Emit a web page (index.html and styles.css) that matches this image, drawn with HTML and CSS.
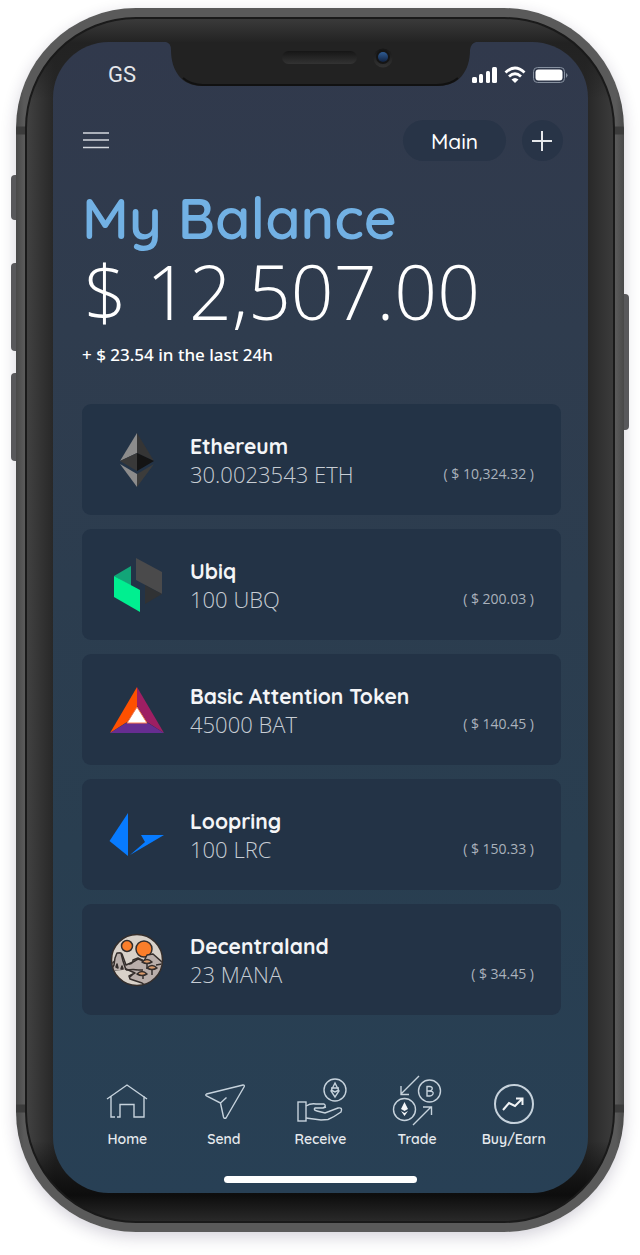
FILE: index.html
```html
<!DOCTYPE html>
<html lang="en">
<head>
<meta charset="utf-8">
<meta name="viewport" content="width=device-width, initial-scale=1">
<title>My Balance</title>
<link rel="stylesheet" href="styles.css">
</head>
<body>
<div class="phone">
  <span class="side-key key-mute"></span>
  <span class="side-key key-up"></span>
  <span class="side-key key-down"></span>
  <span class="side-key key-power"></span>
  <div class="bezel">
    <div class="screen">
      <div class="notch">
        <svg class="notch-shape" viewBox="0 0 304 44" width="304" height="44" aria-hidden="true">
          <defs>
            <linearGradient id="slot" x1="0" y1="0" x2="0" y2="1"><stop offset="0" stop-color="#161616"/><stop offset="1" stop-color="#333"/></linearGradient>
            <linearGradient id="lens" x1="0" y1="0" x2="0" y2="1"><stop offset="0" stop-color="#2f5c94"/><stop offset="1" stop-color="#10213f"/></linearGradient>
          </defs>
          <path d="M-3 0H307Q302 1 301 8C301 29 290 44 269 44H33C13 44 2 29 2 8Q2 1 -3 0Z" fill="#222"/>
          <path d="M14 36Q22 43 34 43H268Q281 43 289 36" fill="none" stroke="#111" stroke-width="2"/>
          <rect x="113" y="9" width="75" height="13" rx="6.500" fill="url(#slot)"/>
          <circle cx="214" cy="16" r="9.500" fill="url(#slot)"/>
          <circle cx="214" cy="15" r="7" fill="#151515"/>
          <circle cx="214" cy="15" r="5" fill="url(#lens)"/>
        </svg>
      </div>

      <div class="status">
        <span>GS</span>
        <svg viewBox="0 0 96 18" width="96" height="18" fill="#fff" aria-hidden="true">
          <rect x="0" y="11" width="5" height="6" rx="1.500"/><rect x="7" y="8" width="4" height="9" rx="1.500"/><rect x="14" y="5" width="4" height="12" rx="1.500"/><rect x="20" y="1" width="5" height="16" rx="1.500"/>
          <g fill="none" stroke="#fff" stroke-width="2.800"><path d="M33.500 6.500Q43 -2.500 52.500 6.500"/><path d="M37 10.500Q43 5 49 10.500"/></g>
          <path d="M39.500 13.500Q43 10.500 46.500 13.500L43 17Z"/>
          <rect x="61.500" y="1.500" width="31" height="15" rx="4" fill="none" stroke="#8791a0"/>
          <rect x="63.500" y="3.500" width="27" height="11" rx="3"/>
          <path d="M94 7Q97 9 94 12Z" fill="#8791a0"/>
        </svg>
      </div>

      <header class="toolbar">
        <button class="menu" type="button" aria-label="Menu"><svg viewBox="0 0 28 20" width="28" height="20"><path d="M1 2H27M1 9H27M1 16.500H27" stroke="#d4d8de" stroke-width="1.600"/></svg></button>
        <button class="wallet" type="button">Main</button>
        <button class="add" type="button" aria-label="Add"><svg viewBox="0 0 21 21" width="21" height="21"><path d="M10 1V21M0 11H20" stroke="#e6e8eb" stroke-width="2"/></svg></button>
      </header>

      <section class="balance">
        <h1>My Balance</h1>
        <p class="total">$ 12,507.00</p>
        <p class="change">+ $ 23.54 in the last 24h</p>
      </section>

      <ul class="assets">
        <li class="asset">
          <svg class="coin" viewBox="0 0 56 56" aria-hidden="true">
            <path d="M28 1L11 29L28 21Z" fill="#8c8c8c"/><path d="M28 1L45 29L28 21Z" fill="#353535"/>
            <path d="M11 29L28 21V39Z" fill="#393939"/><path d="M45 29L28 21V39Z" fill="#141414"/>
            <path d="M11 32L28 42V55Z" fill="#8c8c8c"/><path d="M45 32L28 42V55Z" fill="#3c3c3b"/>
          </svg>
          <div class="holding"><h2>Ethereum</h2><div class="line"><span class="amount">30.0023543 ETH</span><span class="value">( $ 10,324.32 )</span></div></div>
        </li>
        <li class="asset">
          <svg class="coin" viewBox="0 0 56 56" aria-hidden="true">
            <path d="M5 19L22 9V29Z" fill="#12a578"/><path d="M5 19L31 33V55L5 40Z" fill="#00ef90"/>
            <path d="M27 1L53 15V37L27 23Z" fill="#4a4a4b"/><path d="M36 28L53 37L36 47Z" fill="#303234"/>
          </svg>
          <div class="holding"><h2>Ubiq</h2><div class="line"><span class="amount">100 UBQ</span><span class="value">( $ 200.03 )</span></div></div>
        </li>
        <li class="asset">
          <svg class="coin" viewBox="0 0 56 56" aria-hidden="true">
            <path d="M28 5L1 51L18 40L28 25Z" fill="#ff5000"/>
            <path d="M28 5L55 51L38 40L28 24Z" fill="#9e1f63"/><path d="M1 51L17 41H39L55 51Z" fill="#662d91"/>
            <path d="M28 25L38 41H18Z" fill="#fff" stroke="#ff7a4d" stroke-width="1"/>
          </svg>
          <div class="holding"><h2>Basic Attention Token</h2><div class="line"><span class="amount">45000 BAT</span><span class="value">( $ 140.45 )</span></div></div>
        </li>
        <li class="asset">
          <svg class="coin" viewBox="0 0 56 56" aria-hidden="true">
            <path d="M19 6V49L0.500 34Z" fill="#077bff"/><path d="M21 48L36 35L32 28H55Z" fill="#077bff"/>
          </svg>
          <div class="holding"><h2>Loopring</h2><div class="line"><span class="amount">100 LRC</span><span class="value">( $ 150.33 )</span></div></div>
        </li>
        <li class="asset">
          <svg class="coin" viewBox="0 0 56 56" aria-hidden="true">
            <defs><clipPath id="disc"><circle cx="28" cy="28" r="25"/></clipPath></defs>
            <circle cx="28" cy="28" r="25.500" fill="#d8d1c9"/>
            <g clip-path="url(#disc)" stroke="#342e2c" stroke-width="1.500" stroke-linejoin="round">
              <circle cx="18" cy="14" r="5.500" fill="#fa7e2b"/><circle cx="35" cy="17" r="8" fill="#fa7e2b"/>
              <path d="M1 33L7 28L10 21L13 22L17 33L24 30L29 27L35 29L38 23L44 22L54 31V55H38L33 51L21 47L20 44L26 41L17 37L2 38Z" fill="#b9aeaa"/>
              <path d="M2 38L5 33L6 26L8 21H12L14 29L17 38" fill="#b9aeaa"/>
              <path d="M20 32Q24 32 24 28L29 26L35 29M29 38H34M17 38Q25 37 29 38M21 45L24 42M47 33L53 32" fill="none"/>
              <path d="M38 30V37M43 36V43M34 41V47" fill="none"/>
              <path d="M33 30Q38 25 43 30Q38 33 33 30ZM38 36Q43 31 48 36Q43 39 38 36ZM28 42Q33 37 38 42Q33 45 28 42Z" fill="#d99a6b"/>
              <path d="M7 35L8 32L9 36ZM12 37L13 34L14 37Z" fill="#c9571f"/>
            </g>
            <circle cx="28" cy="28" r="25.500" fill="none" stroke="#342e2c" stroke-width="1.500"/>
          </svg>
          <div class="holding"><h2>Decentraland</h2><div class="line"><span class="amount">23 MANA</span><span class="value">( $ 34.45 )</span></div></div>
        </li>
      </ul>

      <nav class="tabs" aria-label="Main navigation">
        <a href="#home"><svg viewBox="0 0 56 52" aria-hidden="true"><path d="M8 22L28 8L48 22M12 19V40H16M18 40H21V27.500H35V40H45V19"/></svg>Home</a>
        <a href="#send"><svg viewBox="0 0 56 52" aria-hidden="true"><path d="M10.500 17L47 8Q49 8 48 10L30 41Q28 42 27.500 40L24.500 26L10.500 19Q9 18 10.500 17ZM24.500 26L30.500 20.500"/></svg>Send</a>
        <a href="#receive"><svg viewBox="0 0 56 52" aria-hidden="true"><rect x="6" y="25" width="8" height="19"/><path d="M14 29Q19 26 24 27H32Q35 29 31 31H23Q21 33 25 34L33 36L46 31Q51 30 49 35Q42 40 36 42.500L29 43L14 41M31 31L34 30"/><circle cx="43" cy="13" r="11"/><path d="M43 6L39 14L43 20L47 14ZM39 13L43 15L47 13M39 11H47"/></svg>Receive</a>
        <a href="#trade"><svg viewBox="0 0 56 52" aria-hidden="true"><path d="M30 -1L12 17M12 9V17.500H20M24 48L42 30M34 30H42.500V38"/><circle cx="40.500" cy="14" r="11"/><circle cx="15.500" cy="32.500" r="11"/><path class="solid" d="M15.500 25L12 32L15.500 34L19 32ZM12 34L15.500 39L19 34L15.500 36Z"/><path d="M37.500 9.500H41Q44 10 43 12.500Q42.500 14 40 14H37.500M40 14Q45 14 44 17Q43 19 41 19H37.500M38 9V19.500"/></svg>Trade</a>
        <a href="#earn"><svg viewBox="0 0 56 52" aria-hidden="true"><circle class="ring" cx="28" cy="27" r="19"/><path class="trend" d="M17 33L23 26L29 29L36 22M30 21.500H36.500V28"/></svg>Buy/Earn</a>
      </nav>
      <div class="home-bar"></div>
    </div>
  </div>
</div>
</body>
</html>
```
FILE: styles.css
```css
* { box-sizing: border-box; }
body { margin: 0; background: #fff; overflow-x: hidden; font-family: "Open Sans", "Noto Sans", sans-serif; }
h1, h2, p, ul { margin: 0; padding: 0; }
button { border: 0; padding: 0; background: none; color: inherit; font: inherit; }

.phone {
  position: relative;
  margin: 8px 16px 23px;
  padding: 9px;
  border-radius: 120px;
  background: linear-gradient(transparent 118px, #3b3b3b 119px, #3b3b3b 126px, transparent 127px, transparent calc(100% - 128px), #3b3b3b calc(100% - 127px), #3b3b3b calc(100% - 120px), transparent calc(100% - 119px)), linear-gradient(90deg, #484848, #5a5a5a 8px, #5a5a5a calc(100% - 8px), #484848);
  box-shadow: 0 5px 16px rgba(40, 30, 70, .2);
}
.side-key { position: absolute; left: -5px; width: 5px; border-radius: 4px 0 0 4px; background: #58585b; }
.key-mute { top: 167px; height: 45px; }
.key-up { top: 255px; height: 88px; }
.key-down { top: 365px; height: 88px; }
.key-power { top: 286px; left: auto; right: -5px; height: 136px; border-radius: 0 4px 4px 0; }

.bezel {
  padding: 23px 25px 28px 26px;
  border: 2px solid #1a1a1a;
  border-radius: 111px;
  background: linear-gradient(#3a3a3a, #222 24px, transparent 80px, transparent calc(100% - 80px), #0d0d0d calc(100% - 26px), #292929), linear-gradient(90deg, #414141, #262626 28px, #262626 calc(100% - 28px), #3b3b3b);
}
.screen {
  position: relative;
  padding-bottom: 10px;
  border-radius: 56px;
  background: linear-gradient(#31394c, #2f3c4e 25%, #293e50 70%, #284055);
  color: #fff;
}
.notch { position: absolute; inset: 0 0 auto; display: flex; justify-content: center; }
.notch-shape { display: block; overflow: visible; }

.status {
  display: flex;
  align-items: center;
  justify-content: space-between;
  height: 66px;
  padding: 0 20px 0 55px;
  font: 22px/30px Roboto, sans-serif;
  color: #e4e6ea;
}
.toolbar { display: flex; align-items: center; gap: 16px; padding: 12px 25px 0 29px; }
.menu { display: flex; margin-right: auto; }
.wallet, .add { height: 41px; border-radius: 21px; background: #283447; }
.wallet, h1, h2, .tabs { font-family: Quicksand, Inter, sans-serif; }
.wallet { width: 103px; font-size: 21px; font-weight: 500; }
.add { display: flex; align-items: center; justify-content: center; width: 41px; }

.balance { padding: 24px 29px 0; }
h1 { font-size: 57px; font-weight: 600; line-height: 66px; color: #72b1e4; }
.total { padding-left: 2px; font-size: 75px; font-weight: 300; line-height: 80px; }
.change { padding-top: 12px; font-family: "Noto Sans", sans-serif; font-size: 17px; font-weight: 500; line-height: 24px; }

.assets { display: grid; gap: 14px; padding: 37px 27px 0 29px; list-style: none; }
.asset { display: flex; align-items: center; gap: 25px; padding: 28px 27px 27px; border-radius: 9px; background: #233346; }
.coin { flex: none; width: 56px; height: 56px; }
.holding { flex: 1; }
h2 { font-size: 21px; font-weight: 700; line-height: 28px; color: #f4f5f7; }
.line { display: flex; align-items: center; justify-content: space-between; }
.amount { font-size: 22px; font-weight: 300; line-height: 28px; color: #c7cdd4; }
.value { font-size: 14px; line-height: 28px; color: #aab2bc; }

.tabs { display: grid; grid-template-columns: repeat(5, 1fr); padding: 62px 26px 0; }
.tabs a { display: flex; flex-direction: column; align-items: center; font-size: 14px; font-weight: 600; line-height: 20px; color: #e6eaee; text-decoration: none; }
.tabs svg { width: 56px; height: 52px; overflow: visible; fill: none; stroke: #c6d2dc; stroke-width: 1.4; }
.tabs .solid { fill: #f4f6f8; stroke: none; }
.tabs .ring { stroke-width: 2; }
.tabs .trend { stroke: #f0f3f5; stroke-width: 2; }
.home-bar { width: 36%; height: 7px; margin: 27px auto 0; border-radius: 4px; background: #fff; }
```
